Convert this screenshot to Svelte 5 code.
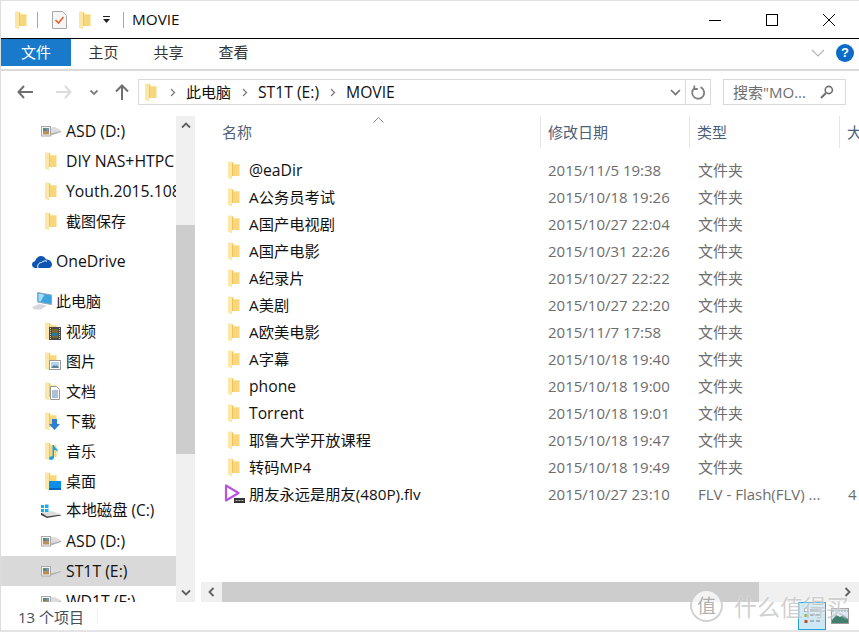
<script>
  const nav = [
    { t: 'ASD (D:)', i: 'drive', x: 66 },
    { t: 'DIY NAS+HTPC', i: 'folder', x: 66 },
    { t: 'Youth.2015.1080p', i: 'folder', x: 66 },
    { t: '截图保存', i: 'folder', x: 66 },
    { t: 'OneDrive', i: 'cloud', x: 56 },
    { t: '此电脑', i: 'pc', x: 56 },
    { t: '视频', i: 'video', x: 66 },
    { t: '图片', i: 'pic', x: 66 },
    { t: '文档', i: 'doc', x: 66 },
    { t: '下载', i: 'down', x: 66 },
    { t: '音乐', i: 'music', x: 66 },
    { t: '桌面', i: 'desk', x: 66 },
    { t: '本地磁盘 (C:)', i: 'win', x: 66, mix: true },
    { t: 'ASD (D:)', i: 'drive', x: 66 },
    { t: 'ST1T (E:)', i: 'drive', x: 66, sel: true },
    { t: 'WD1T (F:)', i: 'drive', x: 66 }
  ];
  const files = [
    ['@eaDir', '2015/11/5 19:38', '文件夹'],
    ['A公务员考试', '2015/10/18 19:26', '文件夹'],
    ['A国产电视剧', '2015/10/27 22:04', '文件夹'],
    ['A国产电影', '2015/10/31 22:26', '文件夹'],
    ['A纪录片', '2015/10/27 22:22', '文件夹'],
    ['A美剧', '2015/10/27 22:20', '文件夹'],
    ['A欧美电影', '2015/11/7 17:58', '文件夹'],
    ['A字幕', '2015/10/18 19:40', '文件夹'],
    ['phone', '2015/10/18 19:00', '文件夹'],
    ['Torrent', '2015/10/18 19:01', '文件夹'],
    ['耶鲁大学开放课程', '2015/10/18 19:47', '文件夹'],
    ['转码MP4', '2015/10/18 19:49', '文件夹'],
    ['朋友永远是朋友(480P).flv', '2015/10/27 23:10', 'FLV - Flash(FLV) ...', '4']
  ];
  const isLatin = (s) => !/[\u4e00-\u9fff]/.test(s);
</script>

{#snippet folder()}
  <svg class="fold" width="13" height="18" viewBox="0 0 13 18">
    <path d="M1 1h5l1 2h5.500v12H5v3l-4-1.500z" fill="#f8d67c" />
    <path d="M1 .500h3.500L5 2v16l-4-1.500z" fill="#fde7a6" />
    <path d="M5 2.500h.8V15H5z" fill="#edbf58" />
    <path d="M6 3h6.500v1H6z" fill="#fbe49c" />
  </svg>
{/snippet}

{#snippet navIcon(k)}
  {#if k === 'folder'}
    {@render folder()}
  {:else if k === 'drive'}
    <svg class="wide" width="20" height="12" viewBox="0 0 20 12">
      <path d="M8 2.500L14 2l6 3.500V7L8 11z" fill="#dcdcdc" />
      <path d="M8 9l12-3v1L8 11z" fill="#b0b0b0" />
      <rect x="0.500" y="1.500" width="9" height="9.500" fill="#f4f4f4" stroke="#a8a8a8" />
      <rect x="2" y="3" width="3" height="3" fill="#5a8f58" />
      <rect x="5" y="3" width="3" height="3" fill="#7a8db5" />
      <rect x="2" y="6" width="6" height="3.500" fill="#b9905d" />
    </svg>
  {:else if k === 'cloud'}
    <svg width="20" height="13" viewBox="0 0 20 13">
      <path d="M3.500 13C1 13 0 11 0 9.500 0 7.500 1.500 6.500 3 6.300 4 3 6.500 1 9 1c2.500 0 4 1.500 5 3.500 3-.3 6 2 6 5 0 2-1.500 3.500-3 3.500z" fill="#0f56b3" />
      <path d="M6 13c-1-3 1-5.500 3.500-5.500C11 6 14 5 15 6.500" fill="none" stroke="#fff" stroke-width="1" />
    </svg>
  {:else if k === 'pc'}
    <svg width="20" height="18" viewBox="0 0 20 18">
      <path d="M5.500 .500L19.500 3v9.500L5.500 10z" fill="#3aa5de" stroke="#93a7b5" />
      <path d="M6.500 1.500l6 1.200-4 7-2-.3z" fill="#a5dcf6" />
      <path d="M0 15l7-3 8 1.500-6 4H2z" fill="#d6d9dc" />
    </svg>
  {:else if k === 'win'}
    <svg class="wide" width="20" height="14" viewBox="0 0 20 14">
      <path d="M0 9l11-1 9 3v.500L6 14l-6-3z" fill="#444" />
      <path d="M0 8.500l11-1.500 9 3.500L6 12.500z" fill="#dedede" />
      <path d="M0 1h3v3H0zM4 .500h3.500v3.500H4zM0 5h3v3H0zM4 5h3.500v3H4z" fill="#12b0ee" />
    </svg>
  {:else}
    <span class="libwrap">
      {@render folder()}
      {#if k === 'video'}
        <svg class="over" width="12" height="13" viewBox="0 0 12 13"><rect width="12" height="13" fill="#4a4a4a" /><rect x="3" y="2" width="6" height="9" fill="#7a6a2a" /><rect x="3" y="6" width="6" height="3" fill="#2f7a9c" /><path d="M1.500 1v11M10.500 1v11" stroke="#ccc" stroke-dasharray="1 1" /></svg>
      {:else if k === 'pic'}
        <svg class="over pic" width="12" height="10" viewBox="0 0 12 10"><rect x=".500" y=".500" width="11" height="9" fill="#fff" stroke="#999" /><rect x="2" y="2" width="8" height="6" fill="#b9d3e6" /><path d="M2 8l3-3 2 1 1-1 2 3z" fill="#5c7f96" /></svg>
      {:else if k === 'doc'}
        <svg class="over docu" width="10" height="14" viewBox="0 0 10 14"><path d="M.500.500h6l3 3v10h-9z" fill="#fff" stroke="#9a9a9a" /><path d="M2 5h6M2 7h6M2 9h6M2 11h6" stroke="#5b84a8" /></svg>
      {:else if k === 'down'}
        <svg class="over" width="11" height="11" viewBox="0 0 11 11"><path d="M3 0h5v5h3l-5.500 6L0 5h3z" fill="#2d7fd3" /></svg>
      {:else if k === 'music'}
        <svg class="over" width="9" height="15" viewBox="0 0 9 15"><path d="M3.500 0h1.500c0 3 4 3 4 7-1-1.500-2.500-2-4-2v7.500c0 1.500-1.500 2.500-3 2.500S0 14 0 13s1.500-2 3.500-1.700z" fill="#18a4ea" /></svg>
      {:else if k === 'desk'}
        <svg class="over" width="12" height="9" viewBox="0 0 12 9"><rect width="12" height="9" fill="#0c8fe8" /><rect y="7" width="12" height="2" fill="#0666bb" /></svg>
      {/if}
    </span>
  {/if}
{/snippet}

<div class="win">
  <header class="title">
    <span class="qat">{@render folder()}</span>
    <span class="bar b1"></span>
    <svg class="check" width="15" height="18" viewBox="0 0 15 18">
      <path d="M.500.500h10l4 4v13H.500z" fill="#f6f6f6" stroke="#a8a8a8" />
      <path d="M3.500 9l3 3 5-6" fill="none" stroke="#e8612c" stroke-width="1.600" />
    </svg>
    <span class="qat2">{@render folder()}</span>
    <svg class="drop" width="9" height="9" viewBox="0 0 9 9"><path d="M1 1.500h7" stroke="#222" /><path d="M1 4h7L4.500 8z" fill="#222" /></svg>
    <span class="bar b2"></span>
    <span class="wintitle">MOVIE</span>
    <span class="caps">
      <svg width="14" height="14" viewBox="0 0 14 14"><path d="M1 7.500h12" stroke="#000" /></svg>
      <svg width="14" height="14" viewBox="0 0 14 14" class="cmax"><rect x="1.500" y="1.500" width="11" height="11" fill="none" stroke="#000" /></svg>
      <svg width="14" height="14" viewBox="0 0 14 14" class="cclose"><path d="M1 1l12 12M13 1L1 13" stroke="#000" /></svg>
    </span>
  </header>

  <nav class="ribbon">
    <span class="tab file">文件</span>
    <span class="tab t1">主页</span>
    <span class="tab t2">共享</span>
    <span class="tab t3">查看</span>
    <span class="ribright">
      <svg width="14" height="8" viewBox="0 0 14 8"><path d="M1 1l6 6 6-6" fill="none" stroke="#b5b5b5" stroke-width="1.200" /></svg>
      <span class="help">?</span>
    </span>
  </nav>

  <div class="addr">
    <svg class="nb back" width="16" height="14" viewBox="0 0 16 14"><path d="M7 1L1.500 7 7 13M2 7h14" fill="none" stroke="#6f6f6f" stroke-width="2" /></svg>
    <svg class="nb fwd" width="16" height="14" viewBox="0 0 16 14"><path d="M9 1l5.500 6L9 13M14 7H0" fill="none" stroke="#dcdcdc" stroke-width="2" /></svg>
    <svg class="nb dn" width="10" height="7" viewBox="0 0 10 7"><path d="M1.500 1.500L5 5l3.500-3.500" fill="none" stroke="#808080" stroke-width="1.800" /></svg>
    <svg class="nb up" width="14" height="16" viewBox="0 0 14 16"><path d="M1 7.500L7 1.500l6 6M7 2v14" fill="none" stroke="#707070" stroke-width="2" /></svg>
    <div class="path">
      <span class="pf">{@render folder()}</span>
      <svg class="sep s0" width="6" height="9" viewBox="0 0 6 9"><path d="M1 1l3.500 3.500L1 8" fill="none" stroke="#808080" stroke-width="1.400" /></svg>
      <span class="crumb">此电脑</span>
      <svg class="sep" width="6" height="9" viewBox="0 0 6 9"><path d="M1 1l3.500 3.500L1 8" fill="none" stroke="#808080" stroke-width="1.400" /></svg>
      <span class="crumb lat">ST1T (E:)</span>
      <svg class="sep" width="6" height="9" viewBox="0 0 6 9"><path d="M1 1l3.500 3.500L1 8" fill="none" stroke="#808080" stroke-width="1.400" /></svg>
      <span class="crumb lat">MOVIE</span>
      <span class="pend">
        <svg width="11" height="7" viewBox="0 0 11 7"><path d="M1 1l4.500 4.500L10 1" fill="none" stroke="#707070" stroke-width="1.600" /></svg>
      </span>
      <span class="refresh">
        <svg width="15" height="15" viewBox="0 0 15 15"><path d="M9.500 2.200A6 6 0 1 1 3.500 3M3.300 .500v3.500h3.500" fill="none" stroke="#808080" stroke-width="1.800" /></svg>
      </span>
    </div>
    <div class="search">
      <span>搜索"MO...</span>
      <svg width="14" height="14" viewBox="0 0 14 14"><circle cx="8.800" cy="5" r="3.600" fill="none" stroke="#707070" stroke-width="1.600" /><path d="M6 8L1 13" stroke="#707070" stroke-width="2.200" /></svg>
    </div>
  </div>

  <div class="main">
    <aside class="navpane">
      <div class="navlist">
        {#each nav as n, i}
          <div class="nrow" class:sel={n.sel} class:gap={i === 4 || i === 5}>
            <span class="nicon" class:top={n.x === 56}>{@render navIcon(n.i)}</span>
            <span class="nlabel" class:lat={isLatin(n.t)} class:mix={n.mix}>{n.t}</span>
          </div>
        {/each}
      </div>
      <div class="vscroll">
        <svg width="10" height="7" viewBox="0 0 10 7"><path d="M1 5.500L5 1.500l4 4" fill="none" stroke="#606060" stroke-width="1.800" /></svg>
        <div class="vtrack"><div class="vthumb"></div></div>
        <svg width="10" height="7" viewBox="0 0 10 7"><path d="M1 1.500L5 5.500l4-4" fill="none" stroke="#606060" stroke-width="1.800" /></svg>
      </div>
    </aside>

    <section class="listpane">
      <div class="cols">
        <span class="col c-name">名称
          <svg class="sort" width="11" height="6" viewBox="0 0 11 6"><path d="M.500 5.500l5-5 5 5" fill="none" stroke="#8a8a8a" /></svg>
        </span>
        <span class="col c-date">修改日期</span>
        <span class="col c-type">类型</span>
        <span class="col c-size">大</span>
      </div>
      <div class="rows">
        {#each files as f, i}
          <div class="row">
            <span class="ficon">
              {#if i === 12}
                <svg width="22" height="20" viewBox="0 0 22 20">
                  <path d="M2 1.500v15l12.500-7.500z" fill="none" stroke="#b956dc" stroke-width="2.200" stroke-linejoin="round" />
                  <rect x="10" y="14" width="11" height="5" fill="#333" />
                  <path d="M11.500 16.500h8" stroke="#bbb" stroke-dasharray="2 1" />
                </svg>
              {:else}
                {@render folder()}
              {/if}
            </span>
            <span class="fname" class:lat={isLatin(f[0])}>{f[0]}</span>
            <span class="fdate">{f[1]}</span>
            <span class="ftype">{f[2]}</span>
            {#if f[3]}<span class="fsize">{f[3]}</span>{/if}
          </div>
        {/each}
      </div>
      <div class="hscroll">
        <svg width="7" height="10" viewBox="0 0 7 10"><path d="M5.500 1L1.500 5l4 4" fill="none" stroke="#606060" stroke-width="1.800" /></svg>
        <div class="htrack"><div class="hthumb"></div></div>
        <svg width="7" height="10" viewBox="0 0 7 10"><path d="M1.500 1l4 4-4 4" fill="none" stroke="#606060" stroke-width="1.800" /></svg>
      </div>
    </section>
  </div>

  <footer class="status">
    <span class="count">13 个项目</span>
    <span class="sdiv"></span>
    <span class="views">
      <span class="vbtn on">
        <svg width="18" height="20" viewBox="0 0 18 20">
          <path d="M7 4h10M7 9h4M13 9h4M7 15h4M13 15h4" stroke="#7c7c7c" />
          <rect x="1.500" y="2.500" width="3" height="3" fill="#fff" stroke="#aaa" />
          <rect x="1.500" y="8" width="3" height="3" fill="#8fae3a" />
          <rect x="1.500" y="14" width="3" height="3" fill="#b4532a" />
        </svg>
      </span>
      <span class="vbtn">
        <svg width="18" height="16" viewBox="0 0 18 16">
          <rect x=".500" y=".500" width="17" height="15" fill="#d8e8f4" stroke="#9a9a9a" />
          <path d="M1 12l4-5 4 2 3-2 5 4v4H1z" fill="#3f7f6c" />
          <path d="M1 3h16" stroke="#4a8fc4" stroke-dasharray="2 1" />
        </svg>
      </span>
    </span>
    <span class="mark" aria-hidden="true"><i>值</i><b>什么值得买</b></span>
  </footer>
</div>

<style>
  :global(body) { margin: 0; background: #fff; }
  .win {
    width: 859px; height: 632px; box-sizing: border-box; overflow: hidden; position: relative;
    border-top: 1px solid #e0e0e0; border-left: 1px solid #dcdcdc; border-bottom: 2px solid #e4e4e4;
    display: flex; flex-direction: column; background: #fff; color: #111;
    font: 15px/20px "Open Sans", "Noto Sans CJK SC", sans-serif;
  }
  svg { display: block; flex: none; }

  .title { height: 37px; flex: none; display: flex; align-items: center; border-bottom: 1px solid #000; }
  .qat { margin-left: 13px; }
  .bar { width: 1px; height: 16px; background: #a8a8a8; }
  .b1 { margin-left: 10px; }
  .check { margin-left: 14px; }
  .qat2 { margin-left: 11px; }
  .drop { margin-left: 11px; }
  .b2 { margin-left: 12px; }
  .wintitle { margin-left: 8px; font-size: 15.300px; line-height: 18px; padding-bottom: 2px; }
  .caps { margin-left: auto; display: flex; align-items: center; margin-right: 23px; }
  .cmax { margin-left: 43px; }
  .cclose { margin-left: 43px; }

  .ribbon { height: 30px; flex: none; display: flex; align-items: flex-start; border-bottom: 2px solid #dadada; position: relative; }
  .tab { width: 65px; text-align: center; line-height: 27px; height: 27px; color: #333; }
  .file { width: 70px; background: #1979ca; color: #fff; }
  .ribright { margin-left: auto; display: flex; align-items: center; margin-right: 5px; gap: 11px; height: 27px; }
  .help { width: 18px; height: 18px; border-radius: 50%; background: #0a6cc8; color: #fff; font: bold 13px/18px "Liberation Sans", sans-serif; text-align: center; }

  .addr { height: 42px; padding-bottom: 3px; flex: none; display: flex; align-items: center; position: relative; }
  .back { margin-left: 16px; }
  .fwd { margin-left: 23px; }
  .dn { margin-left: 17px; }
  .up { margin-left: 16px; }
  .path { margin-left: 9px; width: 571px; height: 24px; border: 1px solid #d9d9d9; display: flex; align-items: center; }
  .pf { margin-left: 5px; }
  .sep { margin: 0 10px 0 11px; }
  .s0 { margin-left: 13px; }
  .crumb.lat { font-size: 15.700px; }
  .pend { margin-left: auto; width: 20px; display: flex; justify-content: center; }
  .refresh { width: 24px; height: 24px; border-left: 1px solid #d9d9d9; display: flex; align-items: center; justify-content: center; }
  .search { margin-left: 12px; height: 24px; width: 110px; border: 1px solid #d9d9d9; display: flex; align-items: center; justify-content: space-between; padding: 0 2px 0 9px; color: #6d6d6d; white-space: nowrap; }
  .search svg { margin-right: 9px; }

  .main { flex: 1; min-height: 0; display: flex; }
  .navpane { width: 194px; flex: none; display: flex; overflow: hidden; position: relative; }
  .navlist { width: 175px; flex: none; overflow: hidden; }
  .nrow { height: 30px; display: flex; align-items: center; white-space: nowrap; overflow: hidden; }
  .nrow.gap { margin-top: 10px; }
  .nrow.sel { background: #d9d9d9; }
  .nicon { width: 65px; display: flex; justify-content: flex-end; padding-right: 9px; box-sizing: border-box; flex: none; }
  .nicon.top { width: 55px; padding-right: 4px; }
  .wide { margin-right: -4px; }
  .nlabel { flex: none; }
  .nlabel.lat { font-size: 15.800px; }
  .nlabel.mix { font-size: 15.400px; }
  .libwrap { display: block; position: relative; width: 13px; height: 18px; }
  .over { position: absolute; left: 5px; bottom: 0; }
  .over.docu { left: 6px; }
  .vscroll { width: 19px; background: #f0f0f0; display: flex; flex-direction: column; align-items: center; padding: 6px 0; box-sizing: border-box; flex: none; }
  .vtrack { flex: 1; width: 100%; position: relative; }
  .vthumb { position: absolute; left: 0; right: 0; top: 96px; height: 229px; background: #cdcdcd; }

  .listpane { flex: 1; min-width: 0; display: flex; flex-direction: column; margin-left: 6px; overflow: hidden; }
  .cols { height: 32px; flex: none; display: flex; color: #4c607a; }
  .col { flex: none; box-sizing: border-box; border-right: 1px solid #e5e5e5; line-height: 32px; padding-left: 7px; position: relative; height: 32px; }
  .c-name { width: 340px; padding-left: 21px; }
  .c-date { width: 149px; }
  .c-type { width: 150px; }
  .c-size { border: 0; }
  .sort { position: absolute; left: 172px; top: 1px; }
  .rows { flex: 1; padding-top: 8px; min-height: 0; overflow: hidden; }
  .row { height: 27px; display: flex; align-items: center; white-space: nowrap; }
  .ficon { width: 48px; flex: none; padding-left: 26px; box-sizing: border-box; }
  .row:last-child .ficon { padding-left: 23px; }
  .fname { width: 299px; flex: none; font-size: 15.250px; }
  .fname.lat { font-size: 15.700px; }
  .fdate { width: 150px; flex: none; color: #6d6d6d; }
  .ftype { width: 150px; flex: none; color: #6d6d6d; }
  .fsize { color: #6d6d6d; }
  .hscroll { height: 20px; background: #f0f0f0; flex: none; display: flex; align-items: center; padding: 0 8px 0 7px; }
  .htrack { flex: 1; height: 100%; margin: 0 8px 0 7px; }
  .hthumb { width: 537px; height: 100%; background: #cdcdcd; }

  .status { height: 28px; flex: none; display: flex; align-items: center; position: relative; color: #444f5e; }
  .count { margin-left: 17px; padding-top: 2px; }
  .sdiv { position: absolute; left: 96px; top: 6px; width: 1px; height: 16px; background: #eee; }
  .views { margin-left: auto; display: flex; height: 100%; margin-right: 5px; }
  .vbtn { width: 28px; display: flex; align-items: center; justify-content: center; box-sizing: border-box; }
  .vbtn.on { background: #cce8f6; border: 1px solid #26a0da; }
  .mark { position: absolute; left: 689px; top: -13px; display: flex; align-items: center; pointer-events: none; }
  .mark i { font-style: normal; width: 29px; height: 29px; border: 2px solid rgba(185, 185, 185, 0.65); border-radius: 50%; background: rgba(255, 255, 255, 0.75); color: rgba(150, 150, 150, 0.75); text-align: center; font: 19px/28px "Noto Sans CJK SC", sans-serif; }
  .mark b { font: 23px/30px "Noto Sans CJK SC", sans-serif; margin-left: 11px; white-space: nowrap; color: rgba(150, 150, 150, 0.45); text-shadow: 0 0 2px #fff; }
</style>
